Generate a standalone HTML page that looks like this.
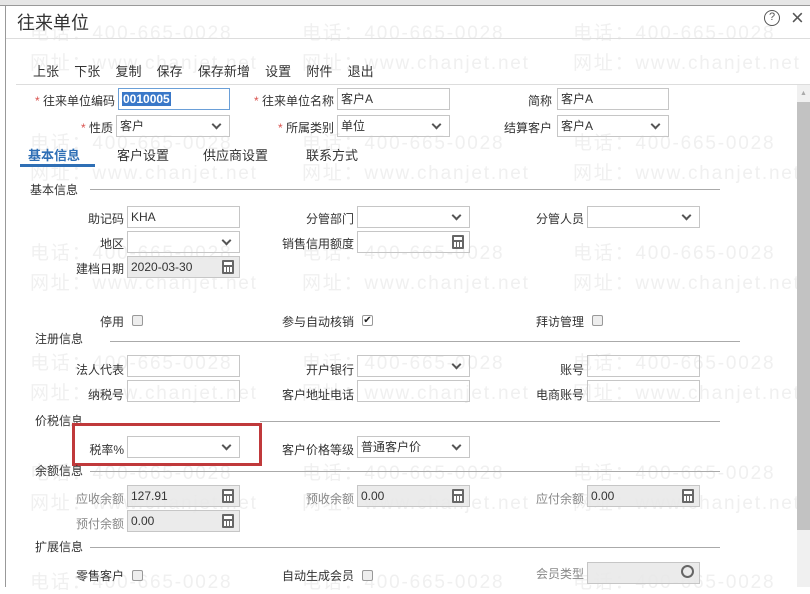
<!DOCTYPE html>
<html><head><meta charset="utf-8"><style>
*{margin:0;padding:0;box-sizing:border-box}
body{width:810px;height:587px;overflow:hidden;background:#fff;font-family:"Liberation Sans","Noto Sans CJK SC",sans-serif;font-size:12px;color:#333;position:relative}
.a{position:absolute;white-space:nowrap}
.wm{position:absolute;white-space:nowrap;color:#f0f0f0;font-size:19px;letter-spacing:1.8px}
.lbl{position:absolute;text-align:right;white-space:nowrap;font-size:12px;color:#333}
.in{position:absolute;height:22px;border:1px solid #c6c6c6;background:transparent;padding-left:3px;line-height:20px;font-size:12px}
.in.g{background:rgba(232,232,232,.85)}
.sel::after{content:"";position:absolute;right:9px;top:5px;width:5px;height:5px;border-right:2px solid #555;border-bottom:2px solid #555;transform:rotate(45deg)}
.cal{position:absolute;right:5px;top:3px;width:12px;height:14px;background:#666;border-radius:1px}
.cal::after{content:"";position:absolute;left:2px;top:2px;width:8px;height:3px;background:#fff}
.cal i{position:absolute;left:2px;top:7px;width:8px;height:5px;background:repeating-linear-gradient(90deg,#fff 0 2px,#666 2px 3px)}
.cb{position:absolute;width:11px;height:11px;border:1px solid #999;background:#eee;border-radius:2px}
.sec{position:absolute;font-size:12px;color:#333}
.ln{position:absolute;height:1px;background:#aaa}
.st{color:#d9534f}
</style></head><body>
<div class="a" style="left:0;top:0;width:810px;height:6px;background:#e6e6e6;border-bottom:1px solid #999"></div>
<div class="a" style="left:5px;top:6px;width:805px;height:581px;background:#fff;border-left:1px solid #999"></div>
<div class="wm" style="left:30px;top:18px">电话：400-665-0028</div>
<div class="wm" style="left:302px;top:18px">电话：400-665-0028</div>
<div class="wm" style="left:573px;top:18px">电话：400-665-0028</div>
<div class="wm" style="left:30px;top:48px">网址：www.chanjet.net</div>
<div class="wm" style="left:302px;top:48px">网址：www.chanjet.net</div>
<div class="wm" style="left:573px;top:48px">网址：www.chanjet.net</div>
<div class="wm" style="left:30px;top:128px">电话：400-665-0028</div>
<div class="wm" style="left:302px;top:128px">电话：400-665-0028</div>
<div class="wm" style="left:573px;top:128px">电话：400-665-0028</div>
<div class="wm" style="left:30px;top:158px">网址：www.chanjet.net</div>
<div class="wm" style="left:302px;top:158px">网址：www.chanjet.net</div>
<div class="wm" style="left:573px;top:158px">网址：www.chanjet.net</div>
<div class="wm" style="left:30px;top:238px">电话：400-665-0028</div>
<div class="wm" style="left:302px;top:238px">电话：400-665-0028</div>
<div class="wm" style="left:573px;top:238px">电话：400-665-0028</div>
<div class="wm" style="left:30px;top:268px">网址：www.chanjet.net</div>
<div class="wm" style="left:302px;top:268px">网址：www.chanjet.net</div>
<div class="wm" style="left:573px;top:268px">网址：www.chanjet.net</div>
<div class="wm" style="left:30px;top:348px">电话：400-665-0028</div>
<div class="wm" style="left:302px;top:348px">电话：400-665-0028</div>
<div class="wm" style="left:573px;top:348px">电话：400-665-0028</div>
<div class="wm" style="left:30px;top:378px">网址：www.chanjet.net</div>
<div class="wm" style="left:302px;top:378px">网址：www.chanjet.net</div>
<div class="wm" style="left:573px;top:378px">网址：www.chanjet.net</div>
<div class="wm" style="left:30px;top:458px">电话：400-665-0028</div>
<div class="wm" style="left:302px;top:458px">电话：400-665-0028</div>
<div class="wm" style="left:573px;top:458px">电话：400-665-0028</div>
<div class="wm" style="left:30px;top:488px">网址：www.chanjet.net</div>
<div class="wm" style="left:302px;top:488px">网址：www.chanjet.net</div>
<div class="wm" style="left:573px;top:488px">网址：www.chanjet.net</div>
<div class="wm" style="left:30px;top:567px">电话：400-665-0028</div>
<div class="wm" style="left:302px;top:567px">电话：400-665-0028</div>
<div class="wm" style="left:573px;top:567px">电话：400-665-0028</div>

<div class="a" style="left:17px;top:9px;font-size:18px;color:#333">往来单位</div>
<div class="a" style="left:764px;top:10px;width:16px;height:16px;border:1.5px solid #555;border-radius:50%;font-size:11px;line-height:13px;text-align:center;color:#555">?</div>
<div class="a" style="left:791px;top:5px;font-size:22px;color:#555">×</div>
<div class="ln" style="left:6px;top:38px;width:804px;background:#ddd"></div>
<div class="a" style="left:33px;top:61px;font-size:13px;color:#333;word-spacing:4px">上张 &nbsp;下张 &nbsp;复制 &nbsp;保存 &nbsp;保存新增 &nbsp;设置 &nbsp;附件 &nbsp;退出</div>
<div class="ln" style="left:16px;top:84px;width:794px;background:#ddd"></div>
<div class="a" style="left:797px;top:85px;width:13px;height:502px;background:#f0f0f0"></div>
<div class="a" style="left:800px;top:90px;font-size:7px;color:#aaa">▲</div>
<div class="a" style="left:797px;top:102px;width:13px;height:428px;background:#c2c2c2"></div>

<div class="lbl" style="left:30px;top:92px;width:85px"><span class="st">*</span> 往来单位编码</div>
<div class="in" style="left:118px;top:88px;width:112px;border-color:#6a9fd8"><span style="background:#3a78c8;color:#fff;font-weight:bold;padding:0 1px">0010005</span></div>
<div class="lbl" style="left:240px;top:92px;width:94px"><span class="st">*</span> 往来单位名称</div>
<div class="in" style="left:337px;top:88px;width:113px">客户A</div>
<div class="lbl" style="left:500px;top:92px;width:52px">简称</div>
<div class="in" style="left:557px;top:88px;width:112px">客户A</div>
<div class="lbl" style="left:30px;top:119px;width:83px"><span class="st">*</span> 性质</div>
<div class="in sel" style="left:116px;top:115px;width:114px">客户</div>
<div class="lbl" style="left:240px;top:119px;width:94px"><span class="st">*</span> 所属类别</div>
<div class="in sel" style="left:337px;top:115px;width:113px">单位</div>
<div class="lbl" style="left:490px;top:119px;width:62px">结算客户</div>
<div class="in sel" style="left:557px;top:115px;width:112px">客户A</div>

<div class="a" style="left:28px;top:145px;font-size:13px;color:#2f6fb5;font-weight:bold">基本信息</div>
<div class="a" style="left:20px;top:164px;width:75px;height:3px;background:#2f6fb5"></div>
<div class="a" style="left:117px;top:145px;font-size:13px">客户设置</div>
<div class="a" style="left:203px;top:145px;font-size:13px">供应商设置</div>
<div class="a" style="left:306px;top:145px;font-size:13px">联系方式</div>

<div class="sec" style="left:30px;top:181px">基本信息</div>
<div class="ln" style="left:90px;top:189px;width:630px"></div>
<div class="lbl" style="left:60px;top:210px;width:64px">助记码</div>
<div class="in" style="left:127px;top:206px;width:113px">KHA</div>
<div class="lbl" style="left:280px;top:210px;width:74px">分管部门</div>
<div class="in sel" style="left:357px;top:206px;width:113px"></div>
<div class="lbl" style="left:510px;top:210px;width:74px">分管人员</div>
<div class="in sel" style="left:587px;top:206px;width:113px"></div>
<div class="lbl" style="left:60px;top:235px;width:64px">地区</div>
<div class="in sel" style="left:127px;top:231px;width:113px"></div>
<div class="lbl" style="left:270px;top:235px;width:84px">销售信用额度</div>
<div class="in" style="left:357px;top:231px;width:113px"><div class="cal"><i></i></div></div>
<div class="lbl" style="left:60px;top:260px;width:64px">建档日期</div>
<div class="in g" style="left:127px;top:256px;width:113px">2020-03-30<div class="cal"><i></i></div></div>

<div class="lbl" style="left:60px;top:313px;width:64px">停用</div>
<div class="cb" style="left:132px;top:315px"></div>
<div class="lbl" style="left:270px;top:313px;width:84px">参与自动核销</div>
<div class="cb" style="left:362px;top:315px;background:#fff;font-size:10px;line-height:9px;text-align:center;color:#222">✔</div>
<div class="lbl" style="left:510px;top:313px;width:74px">拜访管理</div>
<div class="cb" style="left:592px;top:315px"></div>

<div class="sec" style="left:35px;top:330px">注册信息</div>
<div class="ln" style="left:110px;top:341px;width:630px"></div>
<div class="lbl" style="left:60px;top:361px;width:64px">法人代表</div>
<div class="in" style="left:127px;top:355px;width:113px"></div>
<div class="lbl" style="left:270px;top:361px;width:84px">开户银行</div>
<div class="in sel" style="left:357px;top:355px;width:113px"></div>
<div class="lbl" style="left:510px;top:361px;width:74px">账号</div>
<div class="in" style="left:587px;top:355px;width:113px"></div>
<div class="lbl" style="left:60px;top:386px;width:64px">纳税号</div>
<div class="in" style="left:127px;top:380px;width:113px"></div>
<div class="lbl" style="left:270px;top:386px;width:84px">客户地址电话</div>
<div class="in" style="left:357px;top:380px;width:113px"></div>
<div class="lbl" style="left:510px;top:386px;width:74px">电商账号</div>
<div class="in" style="left:587px;top:380px;width:113px"></div>

<div class="sec" style="left:35px;top:412px">价税信息</div>
<div class="ln" style="left:260px;top:421px;width:460px"></div>
<div class="lbl" style="left:60px;top:441px;width:64px">税率%</div>
<div class="in sel" style="left:127px;top:436px;width:113px"></div>
<div class="a" style="left:72px;top:423px;width:190px;height:43px;border:3px solid #c0393b"></div>
<div class="lbl" style="left:270px;top:441px;width:84px">客户价格等级</div>
<div class="in sel" style="left:357px;top:436px;width:113px">普通客户价</div>

<div class="sec" style="left:35px;top:462px">余额信息</div>
<div class="ln" style="left:90px;top:471px;width:630px"></div>
<div class="lbl" style="left:60px;top:490px;width:64px;color:#888">应收余额</div>
<div class="in g" style="left:127px;top:485px;width:113px">127.91<div class="cal"><i></i></div></div>
<div class="lbl" style="left:270px;top:490px;width:84px;color:#888">预收余额</div>
<div class="in g" style="left:357px;top:485px;width:113px">0.00<div class="cal"><i></i></div></div>
<div class="lbl" style="left:510px;top:490px;width:74px;color:#888">应付余额</div>
<div class="in g" style="left:587px;top:485px;width:113px">0.00<div class="cal"><i></i></div></div>
<div class="lbl" style="left:60px;top:515px;width:64px;color:#888">预付余额</div>
<div class="in g" style="left:127px;top:510px;width:113px">0.00<div class="cal"><i></i></div></div>

<div class="sec" style="left:35px;top:538px">扩展信息</div>
<div class="ln" style="left:90px;top:547px;width:630px"></div>
<div class="lbl" style="left:60px;top:567px;width:64px">零售客户</div>
<div class="cb" style="left:132px;top:570px"></div>
<div class="lbl" style="left:270px;top:567px;width:84px">自动生成会员</div>
<div class="cb" style="left:362px;top:570px"></div>
<div class="lbl" style="left:510px;top:565px;width:74px;color:#888">会员类型</div>
<div class="in g" style="left:587px;top:562px;width:113px"><div class="a" style="right:5px;top:2px;width:13px;height:13px;border:2px solid #666;border-radius:50%"></div></div>
</body></html>
